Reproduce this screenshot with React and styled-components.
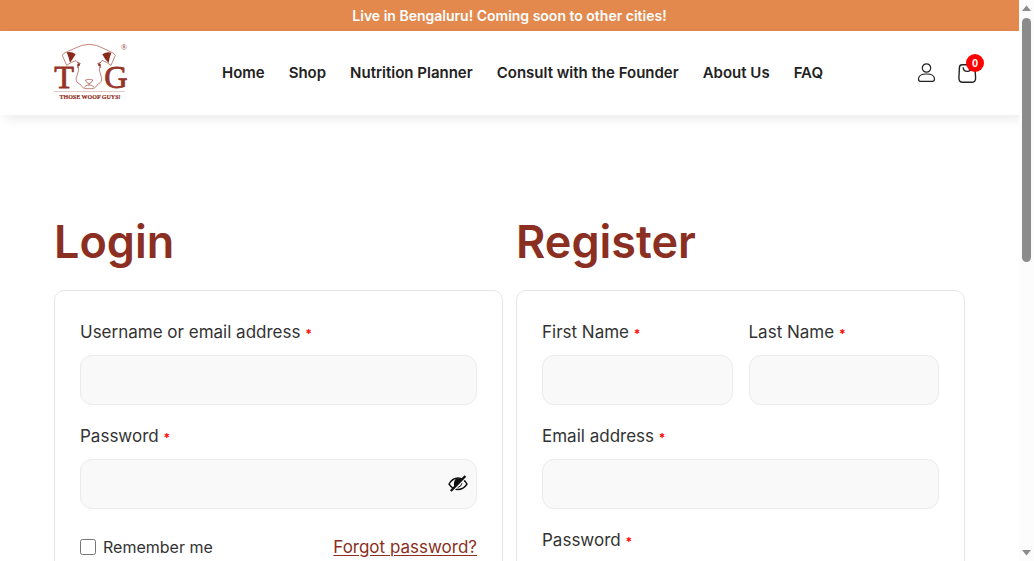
import React from "react";
import styled, { createGlobalStyle } from "styled-components";

const GlobalStyle = createGlobalStyle`
  * { box-sizing: border-box; }
  body {
    margin: 0;
    background: #fff;
    color: #333;
    font-family: Inter, "Noto Sans", sans-serif;
    font-size: 17px;
  }
`;

const Viewport = styled.div`
  display: grid;
  grid-template-columns: minmax(0, 1fr) 15px;
  height: 100vh;
  overflow: hidden;
`;

const Page = styled.div`
  overflow: hidden;
`;

const Announcement = styled.p`
  margin: 0;
  padding: 0 16px;
  background: #e3894e;
  color: #fff;
  font-size: 14px;
  font-weight: 600;
  line-height: 31px;
  text-align: center;
`;

const Header = styled.header`
  display: flex;
  align-items: center;
  justify-content: space-between;
  padding: 12px 42px 12px 54px;
  background: #fff;
  box-shadow: 5px 5px 10px rgba(0, 0, 0, 0.07);
`;

const LogoLink = styled.a`
  display: block;
  height: 60px;
  svg { display: block; overflow: visible; }
`;

const Nav = styled.nav`
  display: flex;
  gap: 24px;
`;

const NavLink = styled.a`
  color: #222;
  font-size: 15px;
  font-weight: 600;
  line-height: 24px;
  text-decoration: none;
  white-space: nowrap;
`;

const Actions = styled.div`
  display: flex;
  gap: 20px;
`;

const IconButton = styled.button`
  position: relative;
  width: 20px;
  height: 20px;
  padding: 0;
  border: 0;
  background: none;
  color: #222;
  svg { display: block; }
`;

const Badge = styled.span`
  position: absolute;
  top: -9px;
  right: -7px;
  width: 18px;
  height: 18px;
  border-radius: 50%;
  background: #f00;
  color: #fff;
  font-size: 11px;
  font-weight: 700;
  line-height: 18px;
  text-align: center;
`;

const Main = styled.main`
  display: grid;
  grid-template-columns: repeat(2, minmax(0, 1fr));
  gap: 13px;
  padding: 97px 54px 40px;
`;

const Heading = styled.h1`
  margin: 0 0 18px;
  color: #8a2f22;
  font-size: 45px;
  font-weight: 600;
  line-height: 60px;
`;

const Card = styled.form`
  display: flex;
  flex-direction: column;
  gap: 18px;
  padding: 28px 25px;
  border: 1px solid #e6e6e6;
  border-radius: 10px;
`;

const FieldRow = styled.div`
  display: grid;
  grid-template-columns: repeat(2, minmax(0, 1fr));
  gap: 16px;
`;

const FieldBox = styled.div`
  display: flex;
  flex-direction: column;
  gap: 10px;
`;

const Label = styled.label`
  line-height: 26px;
`;

const Required = styled.span`
  color: #f00;
  font-size: 12px;
  font-weight: 700;
  line-height: 1;
`;

const InputWrap = styled.div`
  position: relative;
`;

const Input = styled.input`
  display: block;
  width: 100%;
  height: 50px;
  padding: 0 16px;
  border: 1px solid #ebebeb;
  border-radius: 12px;
  background: #f9f9f9;
  font: inherit;
`;

const RevealButton = styled.button`
  position: absolute;
  top: 16px;
  right: 9px;
  width: 20px;
  height: 18px;
  padding: 0;
  border: 0;
  background: none;
  svg { display: block; }
`;

const Options = styled.div`
  display: flex;
  align-items: center;
  justify-content: space-between;
  padding-top: 6px;
  line-height: 28px;
`;

const Remember = styled.label`
  display: flex;
  align-items: center;
  gap: 7px;
  font-size: 16px;
`;

const Checkbox = styled.input`
  width: 16px;
  height: 16px;
  margin: 0;
`;

const ForgotLink = styled.a`
  color: #8a2f22;
  text-underline-offset: 2px;
`;

const Scrollbar = styled.div`
  display: flex;
  flex-direction: column;
  align-items: center;
  padding: 5px 0;
  background: #fcfcfc;
  svg { display: block; flex: none; }
`;

const Track = styled.div`
  flex: 1;
  width: 9px;
  margin: 7px 0;
`;

const Thumb = styled.div`
  height: 46.5%;
  border-radius: 5px;
  background: #8b8b8b;
`;

function Logo() {
  return (
    <svg width="74" height="60" viewBox="42 36 222 180" role="img" aria-label="Those Woof Guys">
      <g fill="none" stroke="#a5483a" strokeWidth="2" strokeLinejoin="round">
        <path d="M82 62 L102 53 Q148 27 192 53 L213 63 Q224 67 226 73 L213 103 Q202 94 187 88 L181 95 M82 62 Q69 66 67 73 L80 103 Q94 92 108 89 L115 96" />
        <path d="M114 101 Q119 118 111 134 Q102 153 121 160 Q128 175 147 173 Q167 175 173 160 Q190 153 183 135 Q175 117 180 101" />
        <path d="M136 147 Q147 143 159 147 L152 156 Q147 159 142 156 Z M147 158 V163 M133 168 Q142 160 147 162 Q153 160 162 168" />
      </g>
      <g fill="#8a2a1d">
        <path d="M80 64 Q96 61 107 70 Q98 85 90 95 Q86 78 80 64 Z" />
        <path d="M187 70 Q200 61 214 65 Q208 80 206 96 Q194 86 187 70 Z" />
        <circle cx="116" cy="101" r="4" />
        <circle cx="178" cy="101" r="4" />
      </g>
      <path d="M112 94 L122 98 M172 98 L182 94 M113 103 V111 M181 103 V111" stroke="#8a2a1d" strokeWidth="2" />
      <g fill="#963428" fontFamily="'Liberation Serif', serif">
        <g fontSize="97" stroke="#963428" strokeWidth="2.500">
          <text x="43" y="171">T</text>
          <text x="193" y="171">G</text>
        </g>
        <text x="150" y="205" fontSize="18" fontWeight="700" textAnchor="middle" stroke="#8a2a1d" strokeWidth="0.600">THOSE WOOF GUYS!</text>
        <text x="252" y="56" fontSize="24" textAnchor="middle">®</text>
      </g>
      <path d="M40 181.500 H255" stroke="#c99a92" strokeWidth="1.500" />
    </svg>
  );
}

function UserIcon() {
  return (
    <svg width="20" height="20" viewBox="0 0 20 20" fill="none" stroke="currentColor" strokeWidth="1.200" aria-hidden="true">
      <circle cx="9.500" cy="5" r="4.200" />
      <path d="M1.500 16 C1.500 12.500 5 11 9.500 11 C14 11 17.500 12.500 17.500 16 Q17.500 18.400 15.500 18.400 H3.500 Q1.500 18.400 1.500 16 Z" />
    </svg>
  );
}

function BagIcon() {
  return (
    <svg width="20" height="20" viewBox="0 0 20 20" fill="none" stroke="currentColor" strokeWidth="1.400" aria-hidden="true">
      <path d="M5.200 1.800 H15.200 Q17.800 1.800 18 4.600 L18.600 15 Q18.700 19.200 14.600 19.200 H5.800 Q1.800 19.200 1.900 15 L2.400 4.600 Q2.600 1.800 5.200 1.800 Z" />
      <path d="M6.200 4.200 Q6.400 8.400 10.200 8.400 Q14 8.400 14.200 4.200" />
    </svg>
  );
}

function EyeOffIcon() {
  return (
    <svg width="20" height="18" viewBox="0 0 20 18" fill="none" stroke="#111" aria-hidden="true">
      <path d="M1 9 Q4.500 3 10 3 Q15.500 3 19 9 Q15.500 14.500 10 14.500 Q4.500 14.500 1 9 Z" strokeWidth="1.400" />
      <path d="M8 3.300 Q4.700 8 6.500 12.500 L13.500 4.600 Q11 3 8 3.300 Z" fill="#111" stroke="none" />
      <path d="M9.500 12.500 Q13.300 12 14 8" strokeWidth="1" />
      <path d="M4 17 L18 2.500" stroke="#f9f9f9" strokeWidth="1.500" />
      <path d="M2.800 16 L17.400 1" strokeWidth="2.400" />
    </svg>
  );
}

function Field({ id, label, type = "text", reveal }) {
  return (
    <FieldBox>
      <Label htmlFor={id}>
        {label} <Required>*</Required>
      </Label>
      <InputWrap>
        <Input id={id} type={type} required />
        {reveal && (
          <RevealButton type="button" aria-label="Show password">
            <EyeOffIcon />
          </RevealButton>
        )}
      </InputWrap>
    </FieldBox>
  );
}

const links = ["Home", "Shop", "Nutrition Planner", "Consult with the Founder", "About Us", "FAQ"];

export default function App() {
  return (
    <>
      <GlobalStyle />
      <Viewport>
        <Page>
          <Announcement>Live in Bengaluru! Coming soon to other cities!</Announcement>
          <Header>
            <LogoLink href="#"><Logo /></LogoLink>
            <Nav>
              {links.map((text) => (
                <NavLink href="#" key={text}>{text}</NavLink>
              ))}
            </Nav>
            <Actions>
              <IconButton type="button" aria-label="Account"><UserIcon /></IconButton>
              <IconButton type="button" aria-label="Cart">
                <BagIcon />
                <Badge>0</Badge>
              </IconButton>
            </Actions>
          </Header>
          <Main>
            <section>
              <Heading>Login</Heading>
              <Card>
                <Field id="login-user" label="Username or email address" />
                <Field id="login-password" label="Password" type="password" reveal />
                <Options>
                  <Remember>
                    <Checkbox type="checkbox" />
                    Remember me
                  </Remember>
                  <ForgotLink href="#">Forgot password?</ForgotLink>
                </Options>
              </Card>
            </section>
            <section>
              <Heading>Register</Heading>
              <Card>
                <FieldRow>
                  <Field id="first-name" label="First Name" />
                  <Field id="last-name" label="Last Name" />
                </FieldRow>
                <Field id="register-email" label="Email address" type="email" />
                <Field id="register-password" label="Password" type="password" reveal />
              </Card>
            </section>
          </Main>
        </Page>
        <Scrollbar aria-hidden="true">
          <svg width="9" height="6" viewBox="0 0 9 6"><path d="M4.500 0.500 L9 6 H0 Z" fill="#8b8b8b" /></svg>
          <Track><Thumb /></Track>
          <svg width="9" height="6" viewBox="0 0 9 6"><path d="M4.500 5.500 L9 0 H0 Z" fill="#8b8b8b" /></svg>
        </Scrollbar>
      </Viewport>
    </>
  );
}
